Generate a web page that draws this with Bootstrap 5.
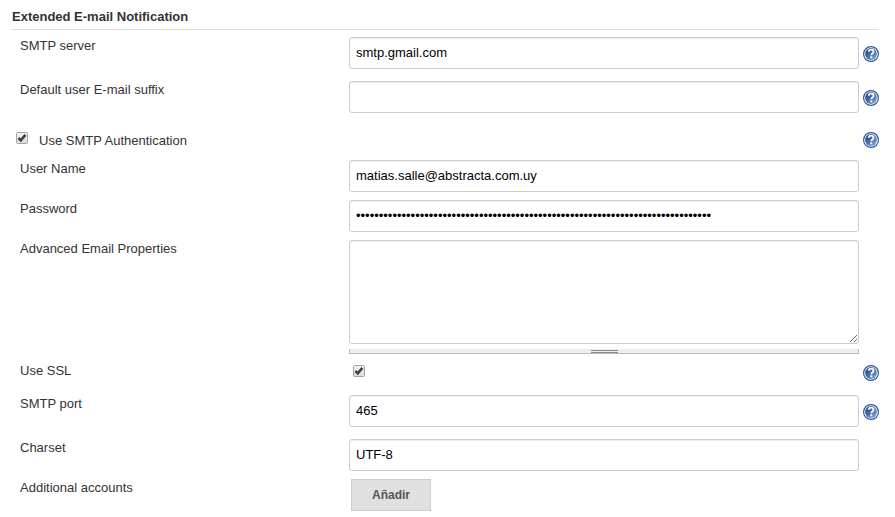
<!DOCTYPE html>
<html lang="en">
<head>
<meta charset="utf-8">
<meta name="viewport" content="width=device-width, initial-scale=1">
<title>Extended E-mail Notification</title>
<link href="https://cdn.jsdelivr.net/npm/bootstrap@5.3.0/dist/css/bootstrap.min.css" rel="stylesheet">
<style>
body { font: 13px/20px "Liberation Sans", Arial, sans-serif; color: #333; background: #fff; overflow: hidden; }
.settings { width: 867px; margin-left: 12px; }
.section-title { font-size: 13px; line-height: 20px; padding-top: 7px; height: 30px; border-bottom: 1px solid #ddd; }
.setting { height: 40px; }
.setting-tall { height: 44px; }
.setting-auth { height: 35px; }
.setting-area { height: 127px; }
.setting-ssl { height: 28px; }
.setting-name { width: 337px; padding: 6px 0 0 8px; }
.setting-ssl .setting-name { padding-top: 1px; }
.setting-value { width: 510px; padding-top: 7px; }
.setting-help { width: 20px; padding: 16px 0 0 4px; }
.setting-auth .setting-help { padding-top: 14px; }
.setting-ssl .setting-help { padding-top: 5px; }
.setting-help svg, .tick-box svg { display: block; }
.form-control, .form-control:focus { height: 32px; padding: 5px 6px 6px; font-size: 13px; line-height: 19px; color: #000; border: 1px solid #ccc; border-radius: 3px; box-shadow: inset 0 1px 1px rgba(0,0,0,.075); }
textarea.form-control { height: 104px; min-height: 104px; resize: vertical; }
.grip { height: 5px; margin-top: 5px; background: #eee; border: solid #bbb; border-width: 0 1px 1px; }
.grip span { width: 27px; height: 3px; margin-top: 1px; border: solid #8b8b83; border-width: 1px 0; }
.tick-box { width: 12px; height: 12px; }
.auth-box { margin: 14px 0 0 4px; }
.auth-name { margin: 13px 0 0 11px; }
.ssl-box { margin: 5px 0 0 4px; }
.btn-add { width: 80px; height: 32px; margin-left: 2px; padding: 0; font-size: 12px; line-height: 30px; color: #555; background: #e0e0e0; border: 1px solid #ccc; border-radius: 0; }
</style>
<script src="https://cdn.jsdelivr.net/npm/bootstrap@5.3.0/dist/js/bootstrap.bundle.min.js"></script>
</head>
<body>
<svg width="0" height="0" class="position-absolute" aria-hidden="true">
  <defs>
    <linearGradient id="disc" x1="0" y1="0" x2="1" y2="1"><stop offset="0.15" stop-color="#24498c"/><stop offset="1" stop-color="#84a8d2"/></linearGradient>
    <linearGradient id="face" x1="0" y1="0" x2="0" y2="1"><stop offset="0" stop-color="#f4f4f4"/><stop offset="1" stop-color="#dcdcdc"/></linearGradient>
    <symbol id="help" viewBox="0 0 16 16">
      <circle cx="8" cy="8" r="7.4" fill="#fff" stroke="#2f5899" stroke-width="1.2"/>
      <circle cx="8" cy="8" r="5.9" fill="url(#disc)"/>
      <path d="M5.8 5.7C5.9 4.3 6.7 3.7 8.1 3.7c1.5 0 2.4.8 2.4 2 0 1.6-2.2 1.7-2.2 3.5" fill="none" stroke="#fff" stroke-width="1.8"/>
      <path d="M7.3 10.3h2v2h-2z" fill="#fff"/>
    </symbol>
    <symbol id="tick" viewBox="0 0 12 12">
      <rect x=".5" y=".5" width="11" height="11" rx="1.2" fill="url(#face)" stroke="#a4a4a4"/>
      <path d="M2.5 6 4.8 8.3 9.4 2.8" fill="none" stroke="#404040" stroke-width="2.6"/>
    </symbol>
  </defs>
</svg>
<main class="settings">
  <h1 class="section-title fw-bold mb-0">Extended E-mail Notification</h1>
  <div class="setting-tall d-flex">
    <label class="setting-name" for="server">SMTP server</label>
    <div class="setting-value"><input id="server" class="form-control" value="smtp.gmail.com"></div>
    <div class="setting-help"><svg width="16" height="16"><use href="#help"/></svg></div>
  </div>
  <div class="setting-tall d-flex">
    <label class="setting-name" for="suffix">Default user E-mail suffix</label>
    <div class="setting-value"><input id="suffix" class="form-control"></div>
    <div class="setting-help"><svg width="16" height="16"><use href="#help"/></svg></div>
  </div>
  <div class="setting-auth d-flex">
    <div class="tick-box auth-box" role="checkbox" aria-checked="true"><svg width="12" height="12"><use href="#tick"/></svg></div>
    <div class="auth-name">Use SMTP Authentication</div>
    <div class="setting-help ms-auto"><svg width="16" height="16"><use href="#help"/></svg></div>
  </div>
  <div class="setting d-flex">
    <label class="setting-name" for="user">User Name</label>
    <div class="setting-value"><input id="user" class="form-control" value="matias.salle@abstracta.com.uy"></div>
  </div>
  <div class="setting d-flex">
    <label class="setting-name" for="pass">Password</label>
    <div class="setting-value"><input id="pass" type="password" class="form-control" value="000000000000000000000000000000000000000000000000000000000000000000000000000000"></div>
  </div>
  <div class="setting-area d-flex">
    <label class="setting-name" for="props">Advanced Email Properties</label>
    <div class="setting-value">
      <textarea id="props" class="form-control d-block"></textarea>
      <div class="grip d-flex justify-content-center"><span></span></div>
    </div>
  </div>
  <div class="setting-ssl d-flex">
    <div class="setting-name">Use SSL</div>
    <div class="setting-value pt-0"><div class="tick-box ssl-box" role="checkbox" aria-checked="true"><svg width="12" height="12"><use href="#tick"/></svg></div></div>
    <div class="setting-help"><svg width="16" height="16"><use href="#help"/></svg></div>
  </div>
  <div class="setting-tall d-flex">
    <label class="setting-name" for="port">SMTP port</label>
    <div class="setting-value"><input id="port" class="form-control" value="465"></div>
    <div class="setting-help"><svg width="16" height="16"><use href="#help"/></svg></div>
  </div>
  <div class="setting d-flex">
    <label class="setting-name" for="charset">Charset</label>
    <div class="setting-value"><input id="charset" class="form-control" value="UTF-8"></div>
  </div>
  <div class="setting d-flex">
    <div class="setting-name">Additional accounts</div>
    <div class="setting-value"><button type="button" class="btn btn-add fw-bold">Añadir</button></div>
  </div>
</main>
</body>
</html>
